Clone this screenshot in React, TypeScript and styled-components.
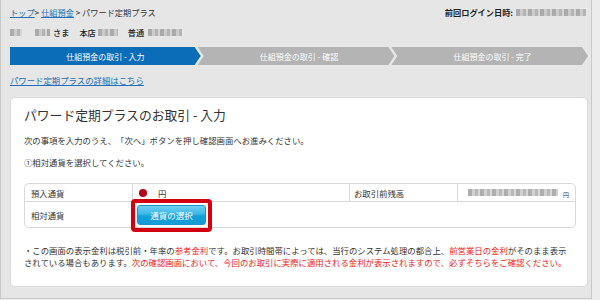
import React from "react";
import styled, { createGlobalStyle } from "styled-components";

const Global = createGlobalStyle`
  html, body { margin: 0; padding: 0; background: #ececec; }
  body {
    font-family: "Noto Sans CJK JP", "Noto Sans", sans-serif;
    color: #333;
    text-spacing-trim: space-all;
  }
  * { box-sizing: border-box; }
`;

const Frame = styled.div`
  width: 592px;
  height: 299px;
  background: #e6e6e6;
  border-left: 1px solid #c9c9c9;
  border-right: 1px solid #c9c9c9;
  border-bottom: 1px solid #c9c9c9;
  padding: 6px 3px 0 9px;
  display: flex;
  flex-direction: column;
  font-size: 8.2px;
`;

const HeaderRow = styled.div`
  display: flex;
  justify-content: space-between;
  align-items: center;
  height: 12px;
  line-height: 12px;
  white-space: nowrap;
`;

const Crumbs = styled.div`
  display: flex;
  gap: 2px;
  color: #333;
`;

const Link = styled.a`
  color: #2170b8;
  text-decoration: underline;
  cursor: pointer;
`;

const Login = styled.div`
  display: flex;
  align-items: center;
  font-weight: 700;
  color: #222;
  padding-right: 2px;
`;

const Mosaic = styled.span<{ w: number; h?: number }>`
  display: inline-block;
  width: ${(p) => p.w}px;
  height: ${(p) => p.h ?? 7}px;
  background: repeating-linear-gradient(
    90deg,
    #a0a0a0 0 4px,
    #c8c8c8 4px 7px,
    #acacac 7px 10px,
    #d2d2d2 10px 12px
  );
  filter: blur(0.7px);
  opacity: 0.85;
`;

const NameRow = styled.div`
  display: flex;
  align-items: center;
  height: 12px;
  line-height: 12px;
  margin-top: 8px;
  white-space: nowrap;
  color: #222;
  font-weight: 500;
`;

const Steps = styled.div`
  display: flex;
  height: 18px;
  margin-top: 9px;
`;

const Step = styled.div<{ active?: boolean; first?: boolean }>`
  flex: 1;
  display: flex;
  align-items: center;
  justify-content: center;
  color: #fff;
  font-size: 8px;
  background: ${(p) => (p.active ? "#0b6db7" : "#b4b4b4")};
  margin-left: ${(p) => (p.first ? "0" : "-3px")};
  padding-left: ${(p) => (p.first ? "0" : "6px")};
  clip-path: ${(p) =>
    p.first
      ? "polygon(0 0, calc(100% - 6px) 0, 100% 50%, calc(100% - 6px) 100%, 0 100%)"
      : "polygon(0 0, calc(100% - 6px) 0, 100% 50%, calc(100% - 6px) 100%, 0 100%, 6px 50%)"};
`;

const DetailLink = styled(Link)`
  display: block;
  margin-top: 9px;
  height: 12px;
  line-height: 12px;
  font-size: 8.4px;
`;

const Card = styled.div`
  margin-top: 11px;
  background: #fff;
  border: 1px solid #dcdcdc;
  border-radius: 5px;
  padding: 9px 12px 18px 13px;
  font-size: 8.4px;
`;

const Title = styled.h1`
  margin: 0;
  font-size: 12.8px;
  font-weight: 400;
  line-height: 16px;
  color: #333;
  white-space: nowrap;
`;

const Para = styled.p<{ mt: number }>`
  margin: ${(p) => p.mt}px 0 0;
  line-height: 12px;
  white-space: nowrap;
  color: #333;
`;

const Table = styled.div`
  margin-top: 15px;
  border: 1px solid #d9d9d9;
  border-radius: 5px;
  width: 552px;
`;

const Row = styled.div<{ h: number; last?: boolean }>`
  display: grid;
  grid-template-columns: 107px 217px 108px 1fr;
  height: ${(p) => p.h}px;
  border-bottom: ${(p) => (p.last ? "none" : "1px solid #d9d9d9")};
`;

const Cell = styled.div<{ span?: number; pl?: number }>`
  display: flex;
  align-items: center;
  padding-left: ${(p) => p.pl ?? 5}px;
  grid-column: span ${(p) => p.span ?? 1};
  border-left: 1px solid #d9d9d9;
  white-space: nowrap;
  color: #333;
  &:first-child { border-left: none; }
`;

const Dot = styled.span`
  width: 8px;
  height: 8px;
  border-radius: 50%;
  background: #b5001a;
  margin: 0 11px 0 6px;
`;

const SmallYen = styled.span`
  font-size: 6px;
  margin-left: 5px;
  margin-top: 3px;
`;

const ButtonWrap = styled.div`
  position: relative;
  display: inline-flex;
`;

const Highlight = styled.span`
  position: absolute;
  left: -6px;
  right: -6px;
  top: -6px;
  bottom: -7px;
  border: 4px solid #d3000f;
  border-radius: 4px;
  pointer-events: none;
`;

const SelectButton = styled.button`
  width: 69px;
  height: 20px;
  border: 1px solid #1b94cc;
  border-radius: 3px;
  background: linear-gradient(#6fd0f2 0%, #3bb7e8 45%, #14a0d9 55%, #139cd6 100%);
  color: #fff;
  font-family: "Noto Sans CJK JP", sans-serif;
  font-size: 8.5px;
  padding: 0;
  cursor: pointer;
`;

const Notes = styled.div`
  margin-top: 16px;
  line-height: 12px;
  white-space: nowrap;
  color: #333;
`;

const Red = styled.span`
  color: #ec1c24;
`;

export default function App() {
  return (
    <>
      <Global />
      <Frame>
        <HeaderRow>
          <Crumbs>
            <span>
              <Link>トップ</Link>&gt;
            </span>
            <span>
              <Link>仕組預金</Link> &gt; パワード定期プラス
            </span>
          </Crumbs>
          <Login>
            前回ログイン日時:
            <Mosaic w={70} style={{ marginLeft: 3 }} />
          </Login>
        </HeaderRow>
        <NameRow>
          <Mosaic w={12} />
          <Mosaic w={15} style={{ marginLeft: 13 }} />
          <span style={{ marginLeft: 3 }}>さま</span>
          <span style={{ marginLeft: 10 }}>本店</span>
          <Mosaic w={20} style={{ marginLeft: 2 }} />
          <span style={{ marginLeft: 10 }}>普通</span>
          <Mosaic w={34} style={{ marginLeft: 4 }} />
        </NameRow>
        <Steps>
          <Step active first>仕組預金の取引 - 入力</Step>
          <Step>仕組預金の取引 - 確認</Step>
          <Step>仕組預金の取引 - 完了</Step>
        </Steps>
        <DetailLink>パワード定期プラスの詳細はこちら</DetailLink>
        <Card>
          <Title>パワード定期プラスのお取引 - 入力</Title>
          <Para mt={11}>次の事項を入力のうえ、「次へ」ボタンを押し確認画面へお進みください。</Para>
          <Para mt={10}>①相対通貨を選択してください。</Para>
          <Table>
            <Row h={18}>
              <Cell pl={6}>預入通貨</Cell>
              <Cell pl={0}>
                <Dot />円
              </Cell>
              <Cell pl={4}>お取引前残高</Cell>
              <Cell pl={10}>
                <Mosaic w={90} />
                <SmallYen>円</SmallYen>
              </Cell>
            </Row>
            <Row h={25} last>
              <Cell pl={6}>相対通貨</Cell>
              <Cell span={3} pl={4}>
                <ButtonWrap>
                  <SelectButton>通貨の選択</SelectButton>
                  <Highlight />
                </ButtonWrap>
              </Cell>
            </Row>
          </Table>
          <Notes>
            ・この画面の表示金利は税引前・年率の<Red>参考金利</Red>です。お取引時間帯によっては、当行のシステム処理の都合上、<Red>前営業日の金利</Red>がそのまま表示
            <br />
            されている場合もあります。<Red>次の確認画面において、今回のお取引に実際に適用される金利が表示されますので、必ずそちらをご確認ください。</Red>
          </Notes>
        </Card>
      </Frame>
    </>
  );
}
